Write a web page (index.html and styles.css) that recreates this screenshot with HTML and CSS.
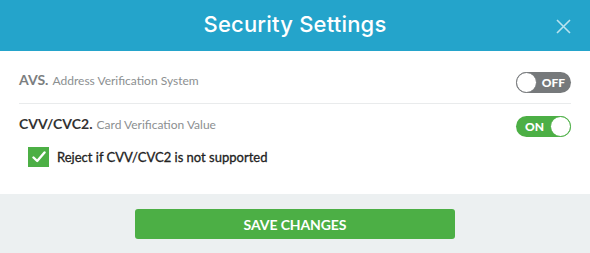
FILE: index.html
```html
<!DOCTYPE html>
<html>
<head>
<meta charset="utf-8">
<link rel="stylesheet" href="styles.css">
</head>
<body>
<div class="modal">
  <header class="modal-header">
    <h1 class="modal-title">Security Settings</h1>
    <button class="close" aria-label="Close">
      <svg width="15" height="15" viewBox="0 0 15 15"><path d="M1 1L14 14M14 1L1 14" stroke="#b9e3ef" stroke-width="1.6" fill="none"/></svg>
    </button>
  </header>
  <div class="modal-body">
    <div class="setting-row first">
      <div class="setting-label"><span class="name muted">AVS.</span> <span class="desc">Address Verification System</span></div>
      <div class="toggle off"><span class="knob"></span><span class="toggle-text">OFF</span></div>
    </div>
    <div class="setting-row second">
      <div class="setting-label"><span class="name">CVV/CVC2.</span> <span class="desc">Card Verification Value</span></div>
      <div class="toggle on"><span class="toggle-text">ON</span><span class="knob"></span></div>
    </div>
    <label class="check-row">
      <span class="checkbox">
        <svg width="14" height="12" viewBox="0 0 14 12"><path d="M1.5 6.5L5.2 10L12.5 1.5" stroke="#fff" stroke-width="2.4" fill="none" stroke-linecap="round" stroke-linejoin="round"/></svg>
      </span>
      <span class="check-label">Reject if CVV/CVC2 is not supported</span>
    </label>
  </div>
  <footer class="modal-footer">
    <button class="save">SAVE CHANGES</button>
  </footer>
</div>
</body>
</html>
```
FILE: styles.css
```css
* { box-sizing: border-box; }
html, body { margin: 0; padding: 0; background: #ffffff; }
body { font-family: "Lato", "Open Sans", sans-serif; width: 590px; height: 253px; overflow: hidden; }

.modal { width: 590px; height: 253px; display: flex; flex-direction: column; background: #fff; }

.modal-header {
  height: 51px;
  background: #24a4cb;
  display: flex;
  align-items: center;
  justify-content: center;
  position: relative;
}
.modal-title {
  margin: 0;
  font-family: "Inter", "Lato", sans-serif;
  font-weight: 500;
  font-size: 22px;
  color: #fff;
  letter-spacing: 0.2px;
  line-height: 1;
  padding-bottom: 4px;
}
.close {
  position: absolute;
  right: 19px;
  top: 19px;
  width: 15px;
  height: 15px;
  padding: 0;
  border: 0;
  background: none;
  display: block;
}
.close svg { display: block; }

.modal-body { padding: 20px 19px 0 19px; height: 143px; }

.setting-row { display: flex; align-items: center; justify-content: space-between; }
.setting-row.first { padding-bottom: 10px; border-bottom: 1px solid #e9ebec; }
.setting-row.second { padding-top: 11px; }

.setting-label { padding-bottom: 6px; line-height: 1; white-space: nowrap; }
.name { font-size: 14px; font-weight: 700; color: #333; }
.name.muted { color: #7b7e80; }
.desc { font-size: 12px; color: #8c8f91; }

.toggle {
  width: 55px;
  height: 21px;
  border-radius: 11px;
  display: flex;
  align-items: center;
  justify-content: space-between;
  color: #fff;
  font-weight: 900;
  font-size: 12px;
}
.toggle.off { background: #76797b; }
.toggle.on { background: #4caf45; }
.knob {
  width: 21px;
  height: 21px;
  border-radius: 50%;
  background: #fff;
  border: 1px solid #76797b;
}
.toggle.on .knob { border-color: #4caf45; }
.toggle.off .toggle-text { padding-right: 6px; }
.toggle.on .toggle-text { padding-left: 9px; }

.check-row { display: flex; align-items: center; gap: 8px; margin: 10px 0 0 9px; }
.checkbox {
  width: 21px;
  height: 20px;
  background: #4caf45;
  display: flex;
  align-items: center;
  justify-content: center;
}
.checkbox svg { display: block; }
.check-label { font-size: 13px; font-weight: 400; color: #222; letter-spacing: 0; -webkit-text-stroke: 0.3px #222; }

.modal-footer {
  flex: 1;
  background: #ecf0f1;
  display: flex;
  justify-content: center;
  padding-top: 15px;
}
.save {
  width: 320px;
  height: 30px;
  border: 0;
  border-radius: 3px;
  background: #4caf45;
  color: #fff;
  font-family: "Lato", sans-serif;
  font-weight: 700;
  font-size: 14px;
  letter-spacing: -0.1px;
}
```
